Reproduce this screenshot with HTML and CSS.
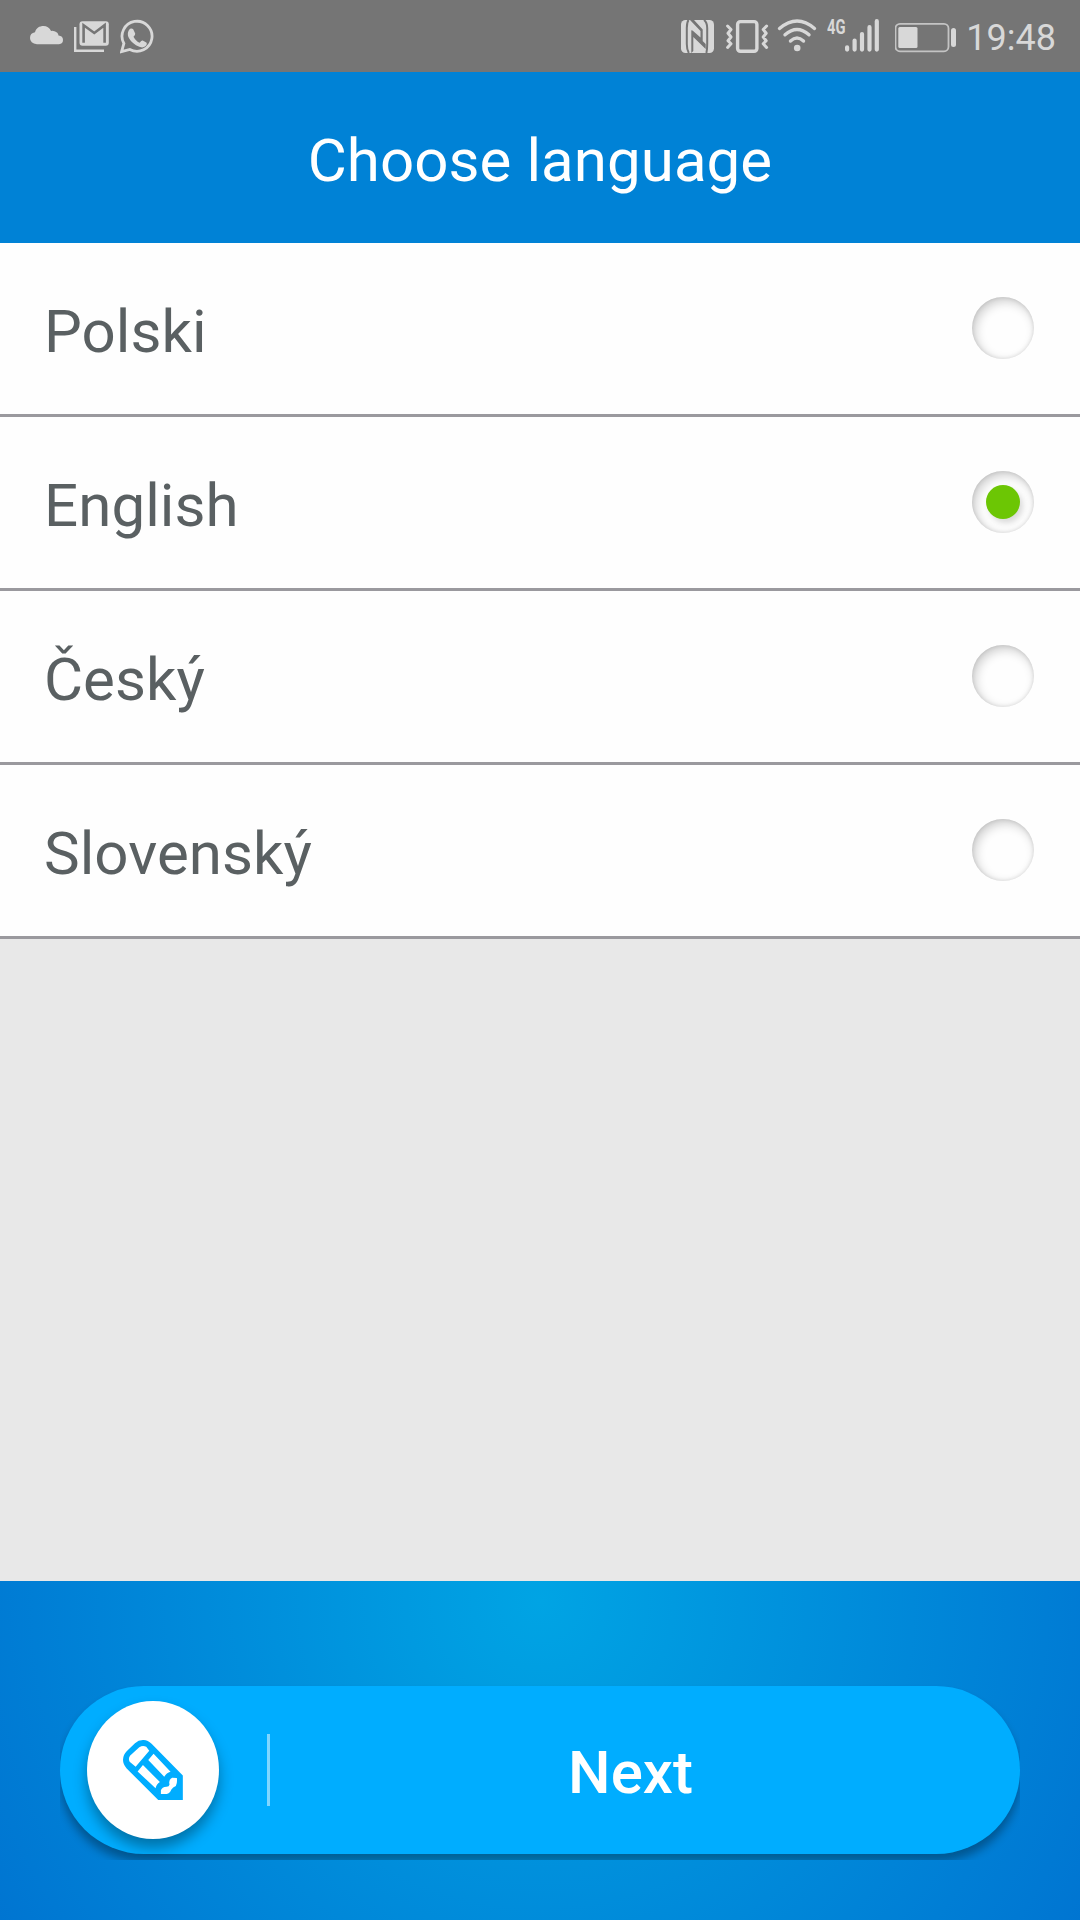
FILE: index.html
```html
<!DOCTYPE html>
<html lang="en">
<head>
<meta charset="utf-8">
<title>Choose language</title>
<link rel="stylesheet" href="styles.css">
</head>
<body>
<div class="screen">
  <div class="status">
    <div class="status-group notifications">
      <svg width="33" height="72" viewBox="30 0 33 72"><path fill="currentColor" d="M37 44.300q-7-.8-7-6.300 0-5 5-5.800C36 28 39.500 26 43.500 26q5 0 7.600 5 1.200-.5 3.400.300 3.500 1 4 4.300 4.500.5 4.500 4.400 0 3.700-4 4.300z"/></svg>
      <svg width="35" height="72" viewBox="74 0 35 72"><path fill="none" stroke="currentColor" stroke-width="2.400" d="M75.200 27v23.700H104"/><rect x="79.500" y="21.300" width="29.300" height="24.500" rx="3" fill="currentColor"/><path fill="none" stroke="#757575" stroke-width="2.600" d="M83.600 42.800V25.200L94.300 33l10.300-7.800v17.600"/></svg>
      <svg width="34" height="72" viewBox="120 0 34 72"><path fill="none" stroke="currentColor" stroke-width="2.800" d="M121.600 51.700 123.900 43.500A15 15 0 1 1 129.800 49.400Z"/><path fill="currentColor" d="M130 28.800q2-1 3.200.5l2 4.300q.3 1.300-1.700 3.200 2.500 4.700 6.200 6 1.800-2.600 3-2.200l3.600 1.800q1.400 1.300-1 3.900-3.300 2.600-9.300-1-6.500-4.300-8-9.200-.8-4.600 2-7.300z"/></svg>
    </div>
    <div class="status-group system">
      <svg width="33" height="72" viewBox="682 0 33 72"><rect x="682" y="20" width="33" height="33" rx="4.500" fill="currentColor"/><g fill="none" stroke="#757575" stroke-width="2"><path d="M689.500 20q-1.700 2.500-1.700 8v16q0 5.500 2 9M705 20q3.200 2.500 3.200 8v16q0 5.500-.8 9"/></g><path fill="#757575" d="M692.300 53V30l14.400 14v5L694.300 37v14zM691 20h4l8.700 9.500V42L694 32.500 693 30l8.500 7.500V31z"/></svg>
      <svg width="43" height="72" viewBox="727 0 43 72"><rect x="738.600" y="21.600" width="19.300" height="29.700" rx="2.800" fill="none" stroke="currentColor" stroke-width="3.400"/><path fill="none" stroke="currentColor" stroke-width="3" stroke-linecap="round" stroke-linejoin="round" d="m728.600 26 3.400 3.500-3 3.700 3 3.800-3 3.700 3 3-3.400 3.800M767.600 26l-3.400 3.500 3 3.700-3 3.800 3 3.700-3 3 3.400 3.800"/></svg>
      <svg width="40" height="72" viewBox="778 0 40 72"><g fill="none" stroke="currentColor" stroke-width="3.400" stroke-linecap="round"><path d="M780.500 28.500q17.700-15 35 0M786 34.800q12-10.500 24 0M791.500 41q6.500-6 13 0"/></g><circle cx="798.200" cy="48" r="3.300" fill="currentColor"/></svg>
      <svg width="52" height="72" viewBox="828 0 52 72"><text class="network" x="828" y="33.500" textLength="18.500" lengthAdjust="spacingAndGlyphs">4G</text><g stroke="currentColor" stroke-width="4.200" stroke-linecap="round"><path d="M848.100 47.300v2.300M855.600 40.500v9.100M863 34v15.600M870.500 27.200v22.400M877.800 21.200v28.400"/></g></svg>
      <svg width="61" height="72" viewBox="896 0 61 72"><rect x="896.500" y="23.800" width="53" height="27.500" rx="4.500" fill="none" stroke="currentColor" stroke-opacity=".8" stroke-width="1.800"/><rect x="899.300" y="27" width="19.200" height="21" rx="1.500" fill="currentColor"/><rect x="952" y="28" width="5" height="19" rx="2.500" fill="currentColor"/></svg>
      <span class="clock">19:48</span>
    </div>
  </div>
  <header class="title-bar">Choose language</header>
  <main class="languages">
    <div class="language"><span>Polski</span><i class="radio"></i></div>
    <div class="language"><span>English</span><i class="radio selected"></i></div>
    <div class="language"><span>Český</span><i class="radio"></i></div>
    <div class="language"><span>Slovenský</span><i class="radio"></i></div>
  </main>
  <footer class="footer">
    <div class="button-frame">
      <div class="next">
        <span class="badge">
          <svg width="60" height="60" viewBox="219 209.500 180.500 180.500"><path fill="#00adff" fill-rule="evenodd" d="M325 390H399V316L305 221Q293 209 279 209.500 265 210 255 219L230 243Q219 254 219 269 219 283 230 295ZM257 290 239 275Q234 266 240 257L268 231Q279 224 289 230L298 242ZM263 304 279 285 330 336Q319 343 317 355ZM295 270 311 251 362 305Q350 308 343 320ZM333 372V361Q336 351 350 350 358 350 359 343 355 329 367 323L381 324Q383 338 378 348 369 351 364 359 361 369 350 372Z"/></svg>
        </span>
        <span class="divider"></span>
        <span class="label">Next</span>
      </div>
    </div>
  </footer>
</div>
</body>
</html>
```

FILE: styles.css
```css
* { box-sizing: border-box; }
body { margin: 0; font-family: Roboto, sans-serif; }
svg { display: block; flex: none; }

.screen {
  width: 1080px;
  height: 1920px;
  display: flex;
  flex-direction: column;
  background: #e8e8e8;
  overflow: hidden;
}

.status {
  height: 72px;
  flex: none;
  display: flex;
  justify-content: space-between;
  padding: 0 24px 0 30px;
  background: #757575;
  color: #d8d8d8;
}
.status-group { display: flex; }
.notifications { gap: 11px; }
.system { gap: 10px; }
.system svg:nth-child(1) { margin-right: 2px; }
.system svg:nth-child(2) { margin-right: -2px; }
.system svg:nth-child(4) { margin-right: 6px; }
.system svg:nth-child(6) { margin-right: -2px; }
.network { font: 700 20px Roboto, sans-serif; fill: currentColor; }
.clock { font-size: 36px; line-height: 76px; }

.title-bar {
  height: 171px;
  flex: none;
  padding-top: 54px;
  background: #0082d6;
  color: #fff;
  font-size: 60px;
  letter-spacing: .07px;
  line-height: 70px;
  text-align: center;
}

.language {
  height: 174px;
  display: flex;
  justify-content: space-between;
  align-items: flex-start;
  padding: 54px 46px 0 44px;
  border-bottom: 3px solid #9a999e;
  background: #fefefe;
  color: #5a6062;
  font-size: 60px;
  letter-spacing: .07px;
  line-height: 70px;
}

.radio {
  width: 62px;
  height: 62px;
  display: grid;
  place-items: center;
  border-radius: 50%;
  box-shadow: inset 3px 4px 11px rgba(0, 0, 0, .2), inset 0 0 4px rgba(0, 0, 0, .12);
}
.selected::before {
  content: "";
  width: 34px;
  height: 34px;
  border-radius: 50%;
  background: #6cc604;
  box-shadow: 3px 4px 6px rgba(0, 0, 0, .15);
}

.footer {
  height: 339px;
  margin-top: auto;
  padding: 102px 60px 0;
  background: radial-gradient(circle 640px at 540px 20px, #00a4e4, #0074d1);
}
/* The frame cuts the button's shadow off at its sides and 6px below it. */
.button-frame {
  height: 177px;
  padding-top: 3px;
  overflow: hidden;
}
.next {
  height: 168px;
  display: flex;
  align-items: center;
  padding-left: 27px;
  border-radius: 84px;
  background: #00adff;
  box-shadow: 0 8px 10px rgba(0, 0, 0, .32);
  color: #fff;
}
.badge {
  width: 132px;
  height: 138px;
  flex: none;
  display: grid;
  place-items: center;
  border-radius: 50%;
  background: #fff;
  box-shadow: 0 9px 14px rgba(0, 0, 0, .34);
}
.divider {
  width: 3px;
  height: 72px;
  flex: none;
  margin-left: 48px;
  background: #80d6ff;
}
.label {
  flex: 1;
  padding: 6px 29px 0 0;
  font-size: 60px;
  font-weight: 500;
  line-height: 70px;
  text-align: center;
}
```
